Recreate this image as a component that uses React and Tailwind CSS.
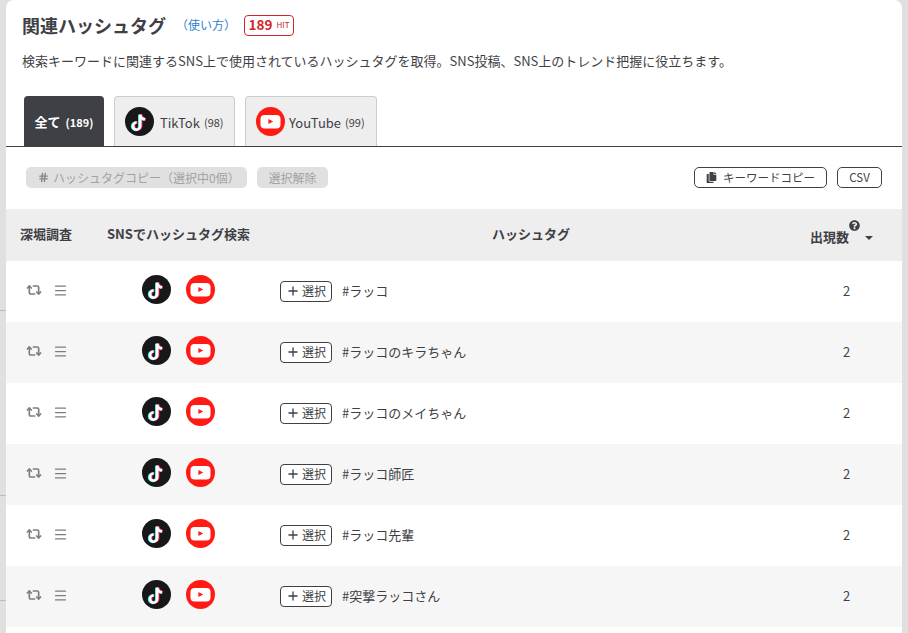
import { Plus, Hash, Repeat2, Menu } from 'lucide-react';
import { FaCopy, FaQuestionCircle } from 'react-icons/fa';

const rows = ['#ラッコ', '#ラッコのキラちゃん', '#ラッコのメイちゃん', '#ラッコ師匠', '#ラッコ先輩', '#突撃ラッコさん'];

function TikTokIcon({ size = 29 }) {
  return (
    <svg width={size} height={size} viewBox="0 0 29 29" className="shrink-0">
      <circle cx="14.5" cy="14.5" r="14.5" fill="#18181a" />
      <g fill="none" strokeWidth="2.6" strokeLinecap="butt">
        <path d="M15.2 7v11.6a3.6 3.6 0 1 1-3.6-3.6M15.2 7.2c.3 2.6 2.2 4.4 4.8 4.7" stroke="#25f4ee" transform="translate(-0.9 0.7)" />
        <path d="M15.2 7v11.6a3.6 3.6 0 1 1-3.6-3.6M15.2 7.2c.3 2.6 2.2 4.4 4.8 4.7" stroke="#fe2c55" transform="translate(0.9 0.3)" />
        <path d="M15.2 7v11.6a3.6 3.6 0 1 1-3.6-3.6M15.2 7.2c.3 2.6 2.2 4.4 4.8 4.7" stroke="#ffffff" transform="translate(0 0.5)" />
      </g>
    </svg>
  );
}

function YouTubeIcon({ size = 29 }) {
  return (
    <svg width={size} height={size} viewBox="0 0 29 29" className="shrink-0">
      <circle cx="14.5" cy="14.5" r="14.5" fill="#ff1a14" />
      <rect x="4.5" y="8" width="20" height="13.5" rx="4" fill="#ffffff" />
      <path d="M12.4 12v5l4.8-2.5z" fill="#ff1a14" />
    </svg>
  );
}

export default function App() {
  return (
    <div className="relative h-[633px] w-[908px] overflow-hidden bg-[#e0e0e0] font-['Noto_Sans_CJK_JP','Noto_Sans',sans-serif] text-[#3f3f46]">
      {/* page behind the panel shows through on the left edge */}
      <div className="absolute left-0 top-[310px] h-px w-[6px] bg-[#bbbbbb]" />
      <div className="absolute left-0 top-[495px] h-px w-[6px] bg-[#bbbbbb]" />
      <div className="absolute left-0 top-[600px] h-px w-[6px] bg-[#bbbbbb]" />

      <div className="relative mx-[6px] h-full overflow-hidden rounded-t-[8px] bg-white">
        {/* title */}
        <div className="flex h-[52px] items-center pb-[2px] pl-[16px]">
          <h1 className="text-[18px] font-bold leading-none text-[#3f3f46]">関連ハッシュタグ</h1>
          <a className="ml-[10px] text-[12px] text-[#2f7fd0]">（使い方）</a>
          <span className="ml-[8px] flex h-[21px] w-[50px] items-center justify-center gap-[4px] rounded-[4px] border border-[#d4242a] bg-white text-[#d4242a]">
            <span className="text-[13.5px] font-bold leading-none">189</span>
            <span className="text-[8px] leading-none">HIT</span>
          </span>
        </div>
        <p className="pl-[16px] text-[13px] leading-[18px] text-[#3f3f46]">
          検索キーワードに関連するSNS上で使用されているハッシュタグを取得。SNS投稿、SNS上のトレンド把握に役立ちます。
        </p>

        {/* tabs */}
        <div className="mt-[26px] flex h-[51px] items-end gap-[10px] border-b border-[#3f3f46] pl-[18px]">
          <div className="flex h-[50px] w-[80px] items-center justify-center gap-[5px] rounded-t-[4px] bg-[#3f3f46] pt-[2px] text-white">
            <span className="text-[13px] font-bold">全て</span>
            <span className="text-[11px] font-bold">(189)</span>
          </div>
          <div className="flex h-[50px] w-[121px] items-center gap-[4px] rounded-t-[4px] border border-b-0 border-[#cccccc] bg-[#eeeeee] pl-[10px]">
            <TikTokIcon />
            <span className="ml-[2px] pt-[2px] text-[13px]">TikTok</span>
            <span className="pt-[2px] text-[11px]">(98)</span>
          </div>
          <div className="flex h-[50px] w-[132px] items-center gap-[4px] rounded-t-[4px] border border-b-0 border-[#cccccc] bg-[#eeeeee] pl-[10px]">
            <YouTubeIcon />
            <span className="pt-[2px] text-[13px]">YouTube</span>
            <span className="pt-[2px] text-[11px]">(99)</span>
          </div>
        </div>

        {/* toolbar */}
        <div className="flex h-[62px] items-center justify-between pb-[1px] pl-[20px] pr-[20px]">
          <div className="flex items-center gap-[10px]">
            <button className="flex h-[21px] w-[221px] items-center rounded-[5px] bg-[#e0e0e0] pl-[12px] text-[12px] text-[#a1a1a6]">
              <Hash size={11} strokeWidth={3} className="mr-[4px] text-[#85858b]" />
              ハッシュタグコピー（選択中0個）
            </button>
            <button className="flex h-[21px] w-[71px] items-center justify-center rounded-[5px] bg-[#e0e0e0] text-[12px] text-[#a1a1a6]">
              選択解除
            </button>
          </div>
          <div className="flex items-center gap-[10px]">
            <button className="flex h-[21px] w-[133px] items-center justify-center gap-[6px] rounded-[5px] border border-[#3f3f46] bg-white text-[11.5px] text-[#3f3f46]">
              <FaCopy size={11} />
              キーワードコピー
            </button>
            <button className="flex h-[21px] w-[45px] items-center justify-center rounded-[5px] border border-[#3f3f46] bg-white text-[11.5px] text-[#3f3f46]">
              CSV
            </button>
          </div>
        </div>

        {/* table */}
        <div className="flex h-[52px] items-center bg-[#eeeeee] text-[13px] font-bold text-[#3f3f46]">
          <div className="w-[80px] pb-[2px] pl-[14px]">深堀調査</div>
          <div className="w-[194px] pb-[2px] pl-[21px]">SNSでハッシュタグ検索</div>
          <div className="flex-1 pb-[2px] pl-[212px]">ハッシュタグ</div>
          <div className="relative flex w-[92px] items-center pt-[3px]">
            出現数
            <FaQuestionCircle size={11} className="absolute left-[39px] top-[-4px]" />
            <span className="ml-[16px] mt-[3px] h-0 w-0 border-x-[4px] border-t-[4px] border-x-transparent border-t-[#3f3f46]" />
          </div>
        </div>
        {rows.map((tag, i) => (
          <div key={tag} className={`flex h-[61px] items-center ${i % 2 ? 'bg-[#f6f6f6]' : 'bg-white'}`}>
            <div className="flex w-[80px] items-center gap-[11px] pb-[3px] pl-[20px] text-[#7c7c83]">
              <Repeat2 size={16} strokeWidth={2.5} />
              <Menu size={15} strokeWidth={2} />
            </div>
            <div className="flex w-[194px] items-center gap-[15px] pb-[4px] pl-[56px]">
              <TikTokIcon />
              <YouTubeIcon />
            </div>
            <div className="flex flex-1 items-center gap-[10px]">
              <button className="flex h-[21px] w-[52px] items-center justify-center gap-[2px] rounded-[4px] border border-[#3f3f46] bg-white pb-[1px] text-[12px] text-[#3f3f46]">
                <Plus size={14} strokeWidth={2.25} />
                選択
              </button>
              <span className="pb-[2px] text-[13px] text-[#3f3f46]">{tag}</span>
            </div>
            <div className="w-[92px] pb-[2px] pl-[33px] text-[13px]">2</div>
          </div>
        ))}
      </div>
    </div>
  );
}
